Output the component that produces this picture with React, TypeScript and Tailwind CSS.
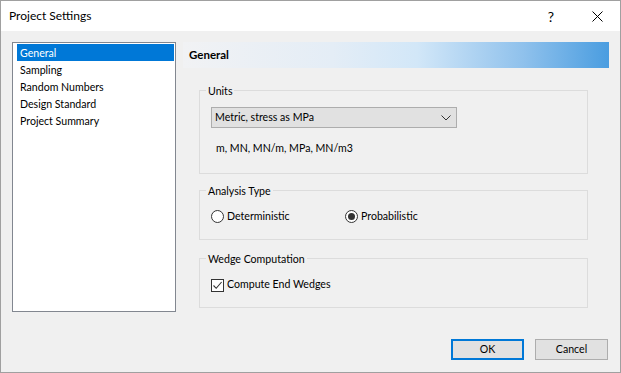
import React from "react";

function Radio({ checked }: { checked?: boolean }) {
  return (
    <span className="w-[13px] h-[13px] rounded-full border border-[#333333] bg-white flex items-center justify-center shrink-0">
      {checked && <span className="w-[7px] h-[7px] rounded-full bg-[#333333]" />}
    </span>
  );
}

function Group({ title, className, children }: { title: string; className?: string; children?: React.ReactNode }) {
  return (
    <div className={"relative border border-[#dcdcdc] " + (className ?? "")}>
      <span className="absolute left-[6px] -top-[7px] px-[2px] bg-[#f0f0f0] leading-[14px]">{title}</span>
      {children}
    </div>
  );
}

export default function App() {
  const items = ["General", "Sampling", "Random Numbers", "Design Standard", "Project Summary"];
  return (
    <div className="w-[621px] h-[373px] border border-[#a0a0a0] bg-[#f0f0f0] flex flex-col text-[10.6px] text-black font-['Lato','Noto_Sans',sans-serif]">
      <div className="h-[30px] bg-white flex items-center shrink-0 text-[12px]">
        <span className="pl-[8px]">Project Settings</span>
        <div className="ml-auto flex h-full">
          <div className="w-[46px] h-full flex items-center justify-center text-[14px]">?</div>
          <div className="w-[46px] h-full flex items-center justify-center">
            <svg width="11" height="11" viewBox="0 0 11 11">
              <path d="M0.5 0.5 L10.5 10.5 M10.5 0.5 L0.5 10.5" stroke="#000" strokeWidth="1" />
            </svg>
          </div>
        </div>
      </div>
      <div className="flex-1 flex flex-col pt-[11px] px-[11px]">
        <div className="flex gap-[7px]">
          <div className="w-[164px] h-[270px] border border-[#828790] bg-white pt-[1px] pl-[4px] pr-[1px] shrink-0">
            {items.map((it, i) => (
              <div
                key={it}
                className={
                  "h-[17px] leading-[16px] pt-[1px] pl-[3px] " + (i === 0 ? "bg-[#0078d7] text-white" : "")
                }
              >
                {it}
              </div>
            ))}
          </div>
          <div className="w-[426px] flex flex-col">
            <div className="h-[26px] flex items-center pl-[6px] font-bold text-[11.5px] bg-[linear-gradient(to_right,#f1f2f4_0%,#e4edf6_35%,#d2e7f8_55%,#8fc1ec_80%,#4a9de0_100%)]">
              General
            </div>
            <div className="ml-[16px] w-[389px] flex flex-col">
              <Group title="Units" className="mt-[22px] h-[84px]">
                <div className="ml-[11px] mt-[16px] w-[246px] h-[21px] border border-[#adadad] bg-[#e1e1e1] flex items-center pl-[3px] pr-[5px]">
                  <span>Metric, stress as MPa</span>
                  <svg className="ml-auto" width="10" height="6" viewBox="0 0 10 6">
                    <path d="M0.5 0.5 L5 5 L9.5 0.5" stroke="#333" strokeWidth="1" fill="none" />
                  </svg>
                </div>
                <div className="ml-[16px] mt-[12px] leading-[16px]">m, MN, MN/m, MPa, MN/m3</div>
              </Group>
              <Group title="Analysis Type" className="mt-[16px] h-[50px]">
                <div className="ml-[11px] mt-[18px] h-[16px] flex items-center">
                  <div className="w-[134px] flex items-center gap-[3px]">
                    <Radio />
                    <span>Deterministic</span>
                  </div>
                  <div className="flex items-center gap-[3px]">
                    <Radio checked />
                    <span>Probabilistic</span>
                  </div>
                </div>
              </Group>
              <Group title="Wedge Computation" className="mt-[18px] h-[50px]">
                <div className="ml-[11px] mt-[18px] h-[16px] flex items-center gap-[3px]">
                  <span className="w-[13px] h-[13px] border border-[#333333] bg-white flex items-center justify-center shrink-0">
                    <svg width="11" height="11" viewBox="0 0 11 11">
                      <path d="M1.5 5.5 L4.2 8.3 L9.6 2" stroke="#333" strokeWidth="1.1" fill="none" />
                    </svg>
                  </span>
                  <span>Compute End Wedges</span>
                </div>
              </Group>
            </div>
          </div>
        </div>
        <div className="mt-[27px] flex justify-end gap-[11px] pr-[1px]">
          <button className="w-[73px] h-[21px] border-2 border-[#0078d7] bg-[#e1e1e1] flex items-center justify-center">
            OK
          </button>
          <button className="w-[73px] h-[21px] border border-[#adadad] bg-[#e1e1e1] flex items-center justify-center">
            Cancel
          </button>
        </div>
      </div>
    </div>
  );
}
